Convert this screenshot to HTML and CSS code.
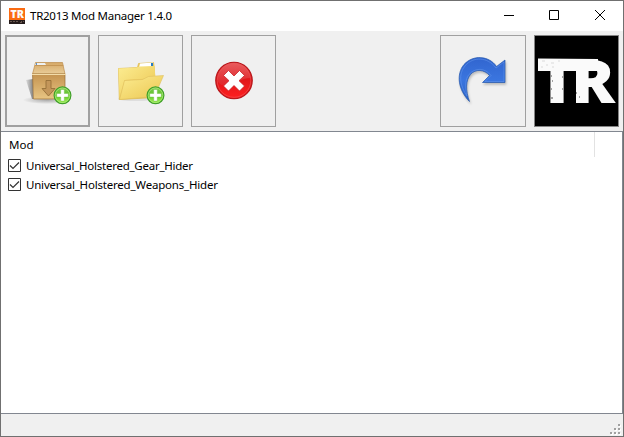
FILE: index.html
```html
<!DOCTYPE html>
<html lang="en">
<head>
<meta charset="utf-8">
<title>TR2013 Mod Manager 1.4.0</title>
<link rel="stylesheet" href="styles.css">
</head>
<body>
<div class="window">
  <header class="titlebar">
    <svg class="app-icon" width="16" height="16" viewBox="0 0 16 16">
      <path fill="#fa6b12" d="M0 0h16v12H0z"/><path fill="#251b1a" d="M0 12h16v4H0z"/>
      <text class="logo-text" x="1.500" y="10" font-size="10" textLength="13.500" lengthAdjust="spacingAndGlyphs">TR</text>
      <path stroke="#85736b" d="M1 13.500h2m1 0h2m1 0h2m3 0h1m1 0h1m-4 1h2" stroke-width=".7"/>
    </svg>
    <h1 class="title">TR2013 Mod Manager 1.4.0</h1>
    <div class="controls">
      <svg class="control" viewBox="0 0 46 30"><path d="M19 14.500h10"/></svg>
      <svg class="control" viewBox="0 0 46 30"><path d="M18.500 9.500h9v9h-9z"/></svg>
      <svg class="control" viewBox="0 0 46 30"><path d="M18 9l10 10M28 9L18 19"/></svg>
    </div>
  </header>
  <nav class="toolbar">
    <button class="tool focused" aria-label="Add package">
      <svg width="85" height="92" viewBox="0 0 85 92">
        <defs>
          <linearGradient id="box" x2="0" y2="1"><stop stop-color="#c49350"/><stop offset="1" stop-color="#e8c583"/></linearGradient>
          <linearGradient id="lid" x2="0" y2="1"><stop stop-color="#d5a866"/><stop offset="1" stop-color="#e9cd99"/></linearGradient>
          <linearGradient id="shade"><stop stop-color="#ddd"/><stop offset="1" stop-color="#858585"/></linearGradient>
          <linearGradient id="green" x2="0" y2="1"><stop stop-color="#7fc956"/><stop offset=".5" stop-color="#5fc526"/><stop offset="1" stop-color="#a4f557"/></linearGradient>
          <radialGradient id="floor"><stop stop-color="#aaa"/><stop offset="1" stop-color="#efefef"/></radialGradient>
        </defs>
        <ellipse cx="42" cy="65" rx="24" ry="4" fill="url(#floor)"/>
        <path fill="url(#shade)" d="M21 45l7-1v20h-1z"/>
        <path fill="url(#lid)" stroke="#bd8d4b" stroke-width=".7" d="M30.500 27.500h27l2.500 11.500H27.500z"/>
        <path fill="#c69655" d="M30 30h28l.5 1H30z"/>
        <path fill="#edf1f2" d="M31 28h9l1 2H30z"/><path fill="#5b91ce" d="M31 28h1v2h-1z"/>
        <path fill="url(#box)" stroke="#9a6d35" stroke-width=".7" d="M27.500 39H60v25H28.500z"/>
        <path stroke="#f2dca9" d="M27 39.500h34"/>
        <path fill="#c3965a" stroke="#967039" stroke-width=".9" d="M41 45.500h5v8h4l-6.500 7.500-6.500-7.500h4z"/>
        <g id="plus"><circle cx="57.500" cy="60.300" r="8.400" fill="url(#green)" stroke="#3f9e29" stroke-width="1.200"/>
        <circle cx="57.500" cy="60.300" r="7.300" fill="none" stroke="#b2ed83" stroke-width=".7"/>
        <path fill="#fff" stroke="#79c24b" stroke-width=".5" d="M55.700 54.500h3.600v4h4v3.600h-4v4h-3.600v-4h-4v-3.600h4z"/></g>
      </svg>
    </button>
    <button class="tool" aria-label="Add folder">
      <svg width="85" height="92" viewBox="0 0 85 92">
        <defs><linearGradient id="folder" y2="1"><stop stop-color="#fcec91"/><stop offset="1" stop-color="#ebc650"/></linearGradient></defs>
        <ellipse cx="38" cy="64" rx="18" ry="2" fill="#dedede"/>
        <path fill="#edc95b" stroke="#dcb94b" stroke-width=".7" d="M20.500 33.500l19-1 1-4 15-1 .8 5 1 30-36 2z"/>
        <path fill="#fff" d="M42 28.500l13-1v4l-14 1z"/><path fill="#267bc6" d="M53 28h2v3h-2z"/>
        <path fill="url(#folder)" d="M20.500 33.500l18-1 3-1 15-.5 1 12-31 2-5 18z"/>
        <path fill="url(#folder)" stroke="#dfbf60" stroke-width=".6" d="M26.500 45.500l18-1 6-3 15-1-9 21-35 3z"/>
        <use href="#plus"/>
      </svg>
    </button>
    <button class="tool" aria-label="Remove">
      <svg width="85" height="92" viewBox="0 0 85 92">
        <defs>
          <linearGradient id="red" x2="0" y2="1"><stop stop-color="#df3033"/><stop offset=".5" stop-color="#e2161a"/><stop offset="1" stop-color="#ff2020"/></linearGradient>
          <linearGradient id="gloss" x2="0" y2="1"><stop stop-color="#ed7375"/><stop offset="1" stop-color="#df3034"/></linearGradient>
        </defs>
        <circle cx="43" cy="45.500" r="18.200" fill="url(#red)" stroke="#b8171b" stroke-width="1.300"/>
        <path fill="url(#gloss)" d="M26.500 44c1-21 31-22 33-1-10 0-17 8-29 7-2-1-4-3-4-6z" opacity=".65"/>
        <circle cx="43" cy="45.500" r="16.800" fill="none" stroke="#ee5759" stroke-width=".6"/>
        <path fill="#fff" stroke="#c6171c" stroke-width=".7" d="M32.500 40.500l5-5 5.500 5.500 5.500-5.500 5 5-5.500 5.200 5.500 5.300-5 5-5.500-5.500-5.500 5.500-5-5 5.500-5.300z"/>
      </svg>
    </button>
    <button class="tool redo" aria-label="Redo">
      <svg width="86" height="92" viewBox="0 0 86 92">
        <defs><linearGradient id="blue" x2="0" y2="1"><stop stop-color="#3165cf"/><stop offset=".5" stop-color="#3a75df"/><stop offset="1" stop-color="#2b62c5"/></linearGradient></defs>
        <path class="arrow" fill="url(#blue)" stroke="#2458ae" stroke-width=".7" d="M29.500 66.500C18 55 16 39 24 29.500c9-10 25-9 32.500 2l8.500-6.500v22.500H42.500l7-7c-5-6-14-7-19-1-5 6-5 16-1 27z"/>
        <path fill="none" stroke="#6699ed" stroke-width=".5" d="M27 61c-7-10-9-22-2-30C33 21 48 22 56 33l8-6v19.500H45l6-6c-6-8-16-8-22-1-4 5-4 13-2 21"/>
      </svg>
    </button>
    <button class="tool launch" aria-label="Launch">
      <svg width="85" height="92" viewBox="0 0 85 92">
        <path fill="#000" d="M0 0h85v92H0z"/>
        <text class="logo-text" y="67.500" font-size="61"><tspan x="3" textLength="40" lengthAdjust="spacingAndGlyphs">T</tspan><tspan x="37" textLength="44" lengthAdjust="spacingAndGlyphs">R</tspan></text>
        <path fill="#fafafa" d="M4 23.500l60 .5v12H4z"/>
        <path stroke="#000" stroke-width=".7" d="M17 41h1m0 5h1m-2 8h1m10-12h1m-1 12h1m-12 9h2m23-5h1m2 4h1"/>
        <path stroke="#ccc" stroke-width=".7" d="M8 26h3m1 4h2m-7 2h2m8-4h3m-2 4h2m4-6h2"/>
      </svg>
    </button>
  </nav>
  <main class="list">
    <div class="heading">Mod</div>
    <label class="row"><svg class="check" width="13" height="13" viewBox="0 0 13 13"><path d="M.5.500h12v12H.5z"/><path class="tick" d="M2 6.500l3 3 6-6"/></svg><span class="gear">Universal_Holstered_Gear_Hider</span></label>
    <label class="row"><svg class="check" width="13" height="13" viewBox="0 0 13 13"><path d="M.5.500h12v12H.5z"/><path class="tick" d="M2 6.500l3 3 6-6"/></svg><span>Universal_Holstered_Weapons_Hider</span></label>
  </main>
  <footer class="status">
    <svg width="12" height="12" viewBox="0 0 12 12"><path fill="#fff" d="M9 1h2v2H9zM5 5h2v2H5zM9 5h2v2H9zM1 9h2v2H1zM5 9h2v2H5zM9 9h2v2H9z"/><path fill="#a0a0a0" d="M8 0h2v2H8zM4 4h2v2H4zM8 4h2v2H8zM0 8h2v2H0zM4 8h2v2H4zM8 8h2v2H8z"/></svg>
  </footer>
</div>
</body>
</html>
```
FILE: styles.css
```css
* { box-sizing: border-box; }
body { margin: 0; overflow: hidden; font: 11.5px/19px "Noto Sans", "Open Sans", sans-serif; color: #000; }
.window { display: flex; flex-direction: column; width: 624px; height: 437px; border: 1px solid #707070; background: #f0f0f0; }
.titlebar { display: flex; align-items: center; height: 30px; padding-left: 8px; background: #fff; flex: none; }
.app-icon { margin-right: 5px; }
.title { margin: 0; padding-bottom: 1px; font-size: 11.5px; font-weight: 400; letter-spacing: -.25px; white-space: nowrap; }
.controls { display: flex; margin-left: auto; }
.control { width: 46px; height: 30px; fill: none; stroke: #000; }
.logo-text { font-family: "Open Sans", sans-serif; font-weight: 800; fill: #fafafa; }
.toolbar { display: flex; gap: 8px; height: 100px; padding: 4px; flex: none; }
.tool { position: relative; width: 85px; height: 92px; padding: 0; border: 0; background: #f0f0f0; flex: none; }
.tool::after { content: ""; position: absolute; inset: 0; border: 1px solid #a0a0a0; }
.focused::after { border-width: 2px; }
.tool svg { display: block; }
.redo { width: 86px; margin-left: auto; }
.arrow { filter: drop-shadow(1px 2px 1px #bbb); }
.launch::after { border-color: #858585; }
.list { height: 283px; border: 1px solid #828790; border-left: 0; background: #fff; flex: none; }
.heading { width: 594px; height: 25px; padding-left: 8px; line-height: 25px; border-right: 1px solid #e2e2e2; }
.row { display: flex; align-items: center; height: 19px; padding-left: 7px; gap: 5px; letter-spacing: -.2px; white-space: nowrap; }
.row span { padding-bottom: 1px; }
.row .gear { letter-spacing: -.25px; }
.heading + .row { margin-top: -1px; }
.check { fill: #fff; stroke: #333; }
.tick { fill: none; stroke-width: 1.2; }
.status { display: flex; flex: 1; justify-content: flex-end; align-items: flex-end; padding-right: 1px; }
```
